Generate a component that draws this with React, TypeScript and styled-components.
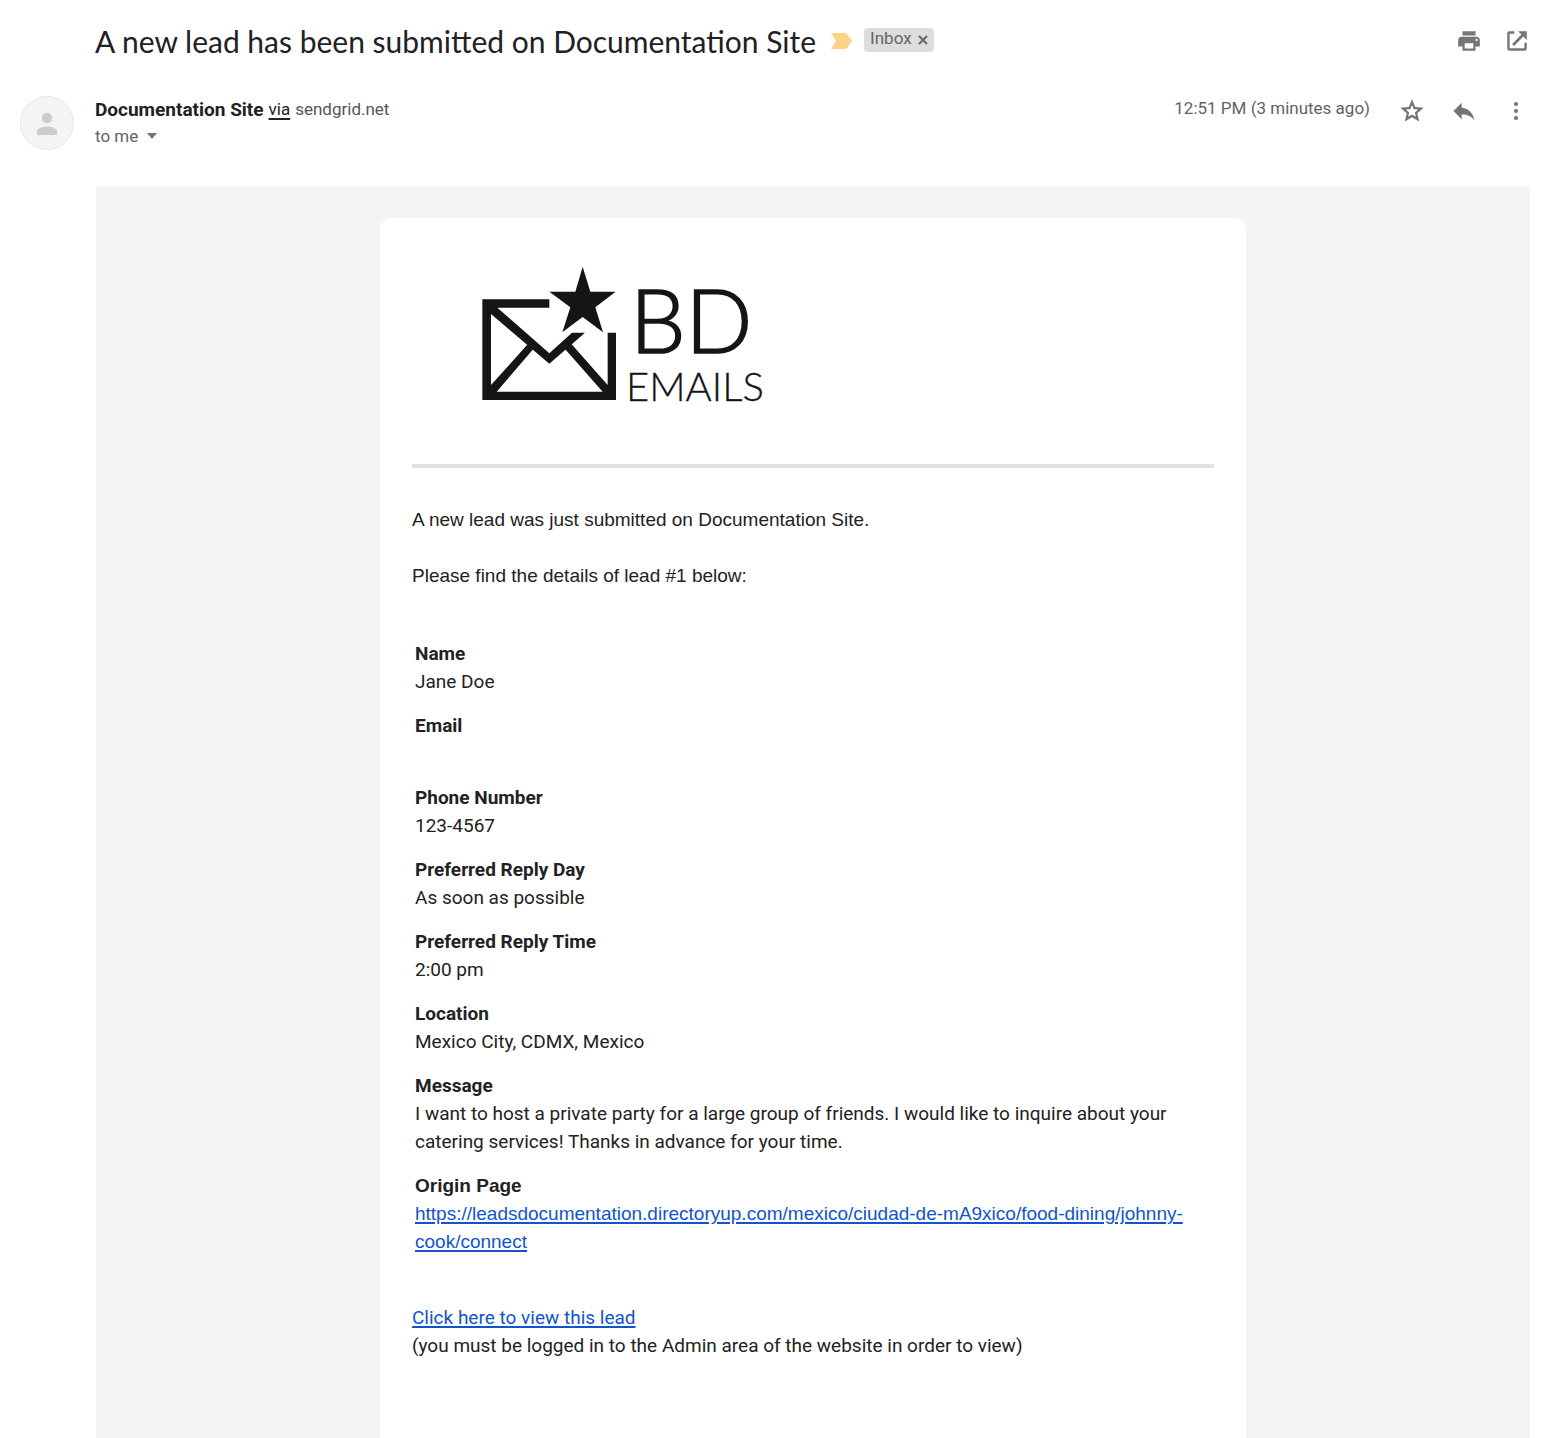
import React from "react";
import styled, { createGlobalStyle } from "styled-components";

const roboto = `Roboto, "Liberation Sans", sans-serif`;
const helvetica = `"Liberation Sans", Roboto, sans-serif`;

const GlobalStyle = createGlobalStyle`
  *, *::before, *::after { box-sizing: border-box; }
  body { margin: 0; background: #fff; color: #222; font-family: ${roboto}; }
`;

const Page = styled.main`
  display: flex;
  flex-direction: column;
  min-height: 100vh;
  padding: 24px 24px 0 20px;
`;

const SubjectRow = styled.header`
  display: flex;
  align-items: center;
  justify-content: space-between;
  padding-left: 75px;
  height: 34px;
`;

const SubjectGroup = styled.div`
  display: flex;
  align-items: center;
`;

const Subject = styled.h1`
  margin: 0;
  font: 400 30px/36px Lato, ${roboto};
  color: #202124;
`;

const Marker = styled.svg`
  width: 21px;
  height: 16px;
  margin: 0 12px 0 15px;
  fill: #fad389;
`;

const Chip = styled.span`
  display: flex;
  align-items: center;
  gap: 6px;
  height: 24px;
  margin-bottom: 2px;
  padding: 0 6px 4px;
  border-radius: 4px;
  background: #ddd;
  color: #666;
  font-size: 17px;
  line-height: 20px;
`;

const ChipRemove = styled.button`
  display: flex;
  padding: 4px 0 0;
  border: 0;
  background: none;
  color: inherit;
  cursor: pointer;
`;

const Actions = styled.div<{ $gap: number }>`
  display: flex;
  align-items: center;
  gap: ${(p) => p.$gap}px;
`;

const IconButton = styled.button<{ $size: number }>`
  display: flex;
  padding: 0;
  border: 0;
  background: none;
  color: #757575;
  cursor: pointer;

  svg {
    width: ${(p) => p.$size}px;
    height: ${(p) => p.$size}px;
    fill: currentColor;
  }
`;

const SenderRow = styled.section`
  display: grid;
  grid-template-columns: 54px 1fr auto;
  column-gap: 21px;
  align-items: start;
  margin-top: 38px;
`;

const Avatar = styled.svg`
  width: 54px;
  height: 54px;
`;

const SenderLine = styled.div`
  display: flex;
  align-items: flex-start;
  gap: 5px;
  height: 28px;
  line-height: 26px;
  font-size: 17px;
  color: #555;
`;

const SenderName = styled.strong`
  font-size: 19px;
  line-height: 28px;
  font-weight: 700;
  color: #202124;
`;

const ViaLink = styled.a`
  color: #222;
  text-decoration: underline;
  text-decoration-thickness: 2px;
  text-underline-offset: 3px;
`;

const Recipient = styled.button`
  display: flex;
  align-items: center;
  gap: 9px;
  padding: 0;
  border: 0;
  background: none;
  font: 400 17px/24px ${roboto};
  color: #5f6368;
  cursor: pointer;
`;

const SenderMeta = styled.div`
  display: flex;
  align-items: center;
  gap: 28px;
  height: 30px;
`;

const Time = styled.time`
  font-size: 17px;
  line-height: 24px;
  padding-bottom: 6px;
  color: #5f6368;
`;

const MailBody = styled.div`
  display: flex;
  flex: 1;
  justify-content: center;
  margin: 36px 0 0 76px;
  padding: 32px 32px 0;
  background: #f3f5f5;
`;

const Card = styled.article`
  width: 100%;
  max-width: 866px;
  padding: 32px 32px 64px;
  border-radius: 12px 12px 0 0;
  background: #fff;
  font-size: 19px;
  line-height: 28px;
`;

const Logo = styled.svg`
  display: block;
  width: 330px;
  height: 170px;
  margin-left: 48px;
  fill: #151515;
  font-family: Lato, ${roboto};
`;

const Divider = styled.hr`
  height: 4px;
  margin: 44px 0 38px;
  border: 0;
  background: #e1e1e1;
`;

const Intro = styled.p`
  margin: 0 0 28px;
  font-family: ${helvetica};
`;

const Fields = styled.dl`
  display: flex;
  flex-direction: column;
  gap: 16px;
  margin: 50px 0 48px;
  padding: 0 3px;
`;

const Field = styled.div<{ $plain?: boolean }>`
  ${(p) => p.$plain && `font-family: ${helvetica};`}
`;

const FieldLabel = styled.dt`
  font-weight: 700;
`;

const FieldValue = styled.dd`
  min-height: 28px;
  margin: 0;
`;

const BodyLink = styled.a`
  color: #15c;
  text-decoration: underline;
  text-decoration-thickness: 2px;
  text-underline-offset: 2px;
`;

const Footnote = styled.p`
  margin: 0;
`;

const originUrl =
  "https://leadsdocumentation.directoryup.com/mexico/ciudad-de-mA9xico/food-dining/johnny-cook/connect";

const fields: { label: string; value: React.ReactNode; plain?: boolean }[] = [
  { label: "Name", value: "Jane Doe" },
  { label: "Email", value: "" },
  { label: "Phone Number", value: "123-4567" },
  { label: "Preferred Reply Day", value: "As soon as possible" },
  { label: "Preferred Reply Time", value: "2:00 pm" },
  { label: "Location", value: "Mexico City, CDMX, Mexico" },
  {
    label: "Message",
    value:
      "I want to host a private party for a large group of friends. I would like to inquire about your catering services! Thanks in advance for your time.",
  },
  { label: "Origin Page", value: <BodyLink href={originUrl}>{originUrl}</BodyLink>, plain: true },
];

function Icon({ d }: { d: string }) {
  return (
    <svg viewBox="0 0 24 24" aria-hidden="true">
      <path d={d} />
    </svg>
  );
}

const icons = {
  print:
    "M19 8H5c-1.66 0-3 1.34-3 3v6h4v4h12v-4h4v-6c0-1.66-1.34-3-3-3zm-3 11H8v-5h8v5zm3-7c-.55 0-1-.45-1-1s.45-1 1-1 1 .45 1 1-.45 1-1 1zm-1-9H6v4h12V3z",
  open: "M9.500 3H5a2 2 0 0 0-2 2v14a2 2 0 0 0 2 2h14a2 2 0 0 0 2-2v-5.500h-2.200V18.800H5.200V5.200h4.300zM13 3H21V11L17.900 7.900L9.300 16.500L7.500 14.700L16.100 6.100Z",
  star: "M22 9.240l-7.190-.62L12 2 9.190 8.630 2 9.240l5.460 4.730L5.820 21 12 17.270 18.180 21l-1.630-7.030L22 9.240zM12 14.900l-3.300 2 .9-3.700-2.900-2.500 3.800-.3L12 6.800l1.500 3.600 3.800.3-2.900 2.500.9 3.700L12 14.900z",
  reply: "M10 9V5l-7 7 7 7v-4.100c5 0 8.500 1.600 11 5.100-1-5-4-10-11-11z",
  more: "M12 7.800a1.800 1.800 0 1 0 0-3.600 1.800 1.800 0 0 0 0 3.600zM12 13.800a1.800 1.800 0 1 0 0-3.600 1.800 1.800 0 0 0 0 3.600zM12 19.800a1.800 1.800 0 1 0 0-3.600 1.800 1.800 0 0 0 0 3.600z",
};

function BrandLogo() {
  return (
    <Logo viewBox="0 0 990 510" role="img" aria-label="BD Emails">
      <path d="M67 148H268V173H112L268 310L336 248H375L268 341L93 192V405L203 283L220 297L110 425H428L315 297L335 283L443 405V248H468V450H67Z" />
      <path d="M368 50L391 125H467L406 172L429 247L368 201L307 247L331 172L268 125H346Z" />
      <g fontWeight="300" stroke="#151515">
        <text x="510" y="310" fontSize="264" strokeWidth="5">BD</text>
        <text x="498" y="454" fontSize="120" strokeWidth="1">EMAILS</text>
      </g>
    </Logo>
  );
}

export default function App() {
  return (
    <>
      <GlobalStyle />
      <Page>
        <SubjectRow>
          <SubjectGroup>
            <Subject>A new lead has been submitted on Documentation Site</Subject>
            <Marker viewBox="0 0 21 16" aria-hidden="true">
              <path d="M0 0H14Q15 0 16 1L21 8L16 15Q15 16 14 16H0L5 8Z" />
            </Marker>
            <Chip>
              Inbox
              <ChipRemove aria-label="Remove label Inbox">
                <svg width="10" height="10" viewBox="0 0 10 10" stroke="currentColor" strokeWidth="2">
                  <path d="M1 1L9 9M9 1L1 9" />
                </svg>
              </ChipRemove>
            </Chip>
          </SubjectGroup>
          <Actions $gap={22}>
            <IconButton $size={26} aria-label="Print"><Icon d={icons.print} /></IconButton>
            <IconButton $size={26} aria-label="Open in new window"><Icon d={icons.open} /></IconButton>
          </Actions>
        </SubjectRow>

        <SenderRow>
          <Avatar viewBox="0 0 54 54" aria-hidden="true">
            <circle cx="27" cy="27" r="26.5" fill="#f4f4f4" stroke="#e6e6e6" />
            <circle cx="27" cy="22" r="5.2" fill="#ccc" />
            <path d="M17 39V35.500C17 32 23 30.500 27 30.500S37 32 37 35.500V39Z" fill="#ccc" />
          </Avatar>
          <div>
            <SenderLine>
              <SenderName>Documentation Site</SenderName>
              <ViaLink href="#via">via</ViaLink>
              <span>sendgrid.net</span>
            </SenderLine>
            <Recipient>
              to me
              <svg width="10" height="6" viewBox="0 0 10 6" fill="#757575" aria-hidden="true">
                <path d="M0 0H10L5 6Z" />
              </svg>
            </Recipient>
          </div>
          <SenderMeta>
            <Time>12:51 PM (3 minutes ago)</Time>
            <Actions $gap={24}>
              <IconButton $size={28} aria-label="Star"><Icon d={icons.star} /></IconButton>
              <IconButton $size={28} aria-label="Reply"><Icon d={icons.reply} /></IconButton>
              <IconButton $size={28} aria-label="More"><Icon d={icons.more} /></IconButton>
            </Actions>
          </SenderMeta>
        </SenderRow>

        <MailBody>
          <Card>
            <BrandLogo />
            <Divider />
            <Intro>A new lead was just submitted on Documentation Site.</Intro>
            <Intro>Please find the details of lead #1 below:</Intro>
            <Fields>
              {fields.map((f) => (
                <Field key={f.label} $plain={f.plain}>
                  <FieldLabel>{f.label}</FieldLabel>
                  <FieldValue>{f.value}</FieldValue>
                </Field>
              ))}
            </Fields>
            <Footnote>
              <BodyLink href="#lead">Click here to view this lead</BodyLink>
              <br />
              (you must be logged in to the Admin area of the website in order to view)
            </Footnote>
          </Card>
        </MailBody>
      </Page>
    </>
  );
}
